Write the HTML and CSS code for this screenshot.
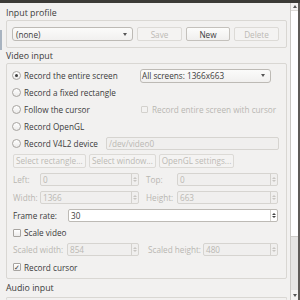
FILE: index.html
```html
<!DOCTYPE html>
<html>
<head>
<meta charset="utf-8">
<link rel="stylesheet" href="styles.css">
</head>
<body>
<div class="topbar"></div>
<div class="leftmark"></div>
<div class="main">
  <div class="content">
    <div class="title t1">Input profile</div>
    <div class="group g1">
      <div class="row r-profile">
        <div class="combo w-profile"><span class="ctext">(none)</span><span class="carrow"></span></div>
        <div class="btn dis w-save">Save</div>
        <div class="btn w-new">New</div>
        <div class="btn dis w-del">Delete</div>
      </div>
    </div>
    <div class="title t2">Video input</div>
    <div class="group g2">
      <div class="row h17">
        <div class="opt w-opt1"><span class="radio on"></span><span>Record the entire screen</span></div>
        <div class="combo w-screens"><span class="ctext">All screens: 1366x663</span><span class="carrow"></span></div>
      </div>
      <div class="row h17">
        <div class="opt"><span class="radio"></span><span>Record a fixed rectangle</span></div>
      </div>
      <div class="row h17">
        <div class="opt w-opt1"><span class="radio"></span><span>Follow the cursor</span></div>
        <div class="opt dis-text"><span class="check dis small"></span><span>Record entire screen with cursor</span></div>
      </div>
      <div class="row h17">
        <div class="opt"><span class="radio"></span><span>Record OpenGL</span></div>
      </div>
      <div class="row h16">
        <div class="opt w-opt5"><span class="radio"></span><span>Record V4L2 device</span></div>
        <div class="edit dis w-dev">/dev/video0</div>
      </div>
      <div class="row h19 r-btns">
        <div class="btn dis w-selrect">Select rectangle...</div>
        <div class="btn dis w-selwin">Select window...</div>
        <div class="btn dis w-opengl">OpenGL settings...</div>
      </div>
      <div class="row h18">
        <span class="lbl dis-text w-l1">Left:</span>
        <div class="spin dis w-s1"><span class="sval">0</span><span class="sarrows"><i class="up"></i><i class="dn"></i></span></div>
        <span class="lbl dis-text w-l2">Top:</span>
        <div class="spin dis w-s2"><span class="sval">0</span><span class="sarrows"><i class="up"></i><i class="dn"></i></span></div>
      </div>
      <div class="row h18">
        <span class="lbl dis-text w-l1">Width:</span>
        <div class="spin dis w-s1"><span class="sval">1366</span><span class="sarrows"><i class="up"></i><i class="dn"></i></span></div>
        <span class="lbl dis-text w-l2">Height:</span>
        <div class="spin dis w-s2"><span class="sval">663</span><span class="sarrows"><i class="up"></i><i class="dn"></i></span></div>
      </div>
      <div class="row h18">
        <span class="lbl w-fr">Frame rate:</span>
        <div class="spin w-frs"><span class="sval">30</span><span class="sarrows"><i class="up"></i><i class="dn"></i></span></div>
      </div>
      <div class="row h17">
        <div class="opt"><span class="check"></span><span>Scale video</span></div>
      </div>
      <div class="row h17">
        <span class="lbl dis-text w-sw">Scaled width:</span>
        <div class="spin dis w-sws"><span class="sval">854</span><span class="sarrows"><i class="up"></i><i class="dn"></i></span></div>
        <span class="lbl dis-text w-sh">Scaled height:</span>
        <div class="spin dis w-shs"><span class="sval">480</span><span class="sarrows"><i class="up"></i><i class="dn"></i></span></div>
      </div>
      <div class="row h18">
        <div class="opt"><span class="check on">✓</span><span>Record cursor</span></div>
      </div>
    </div>
    <div class="title t3">Audio input</div>
    <div class="group g3"></div>
  </div>
  <div class="scrollbar">
    <div class="sb-up"></div>
    <div class="sb-thumb"></div>
    <div class="sb-track"></div>
    <div class="sb-dn"></div>
  </div>
  <div class="edge"></div>
</div>
</body>
</html>
```

FILE: styles.css
```css
* { box-sizing: border-box; }
html, body {
  margin: 0;
  padding: 0;
  width: 300px;
  height: 300px;
  overflow: hidden;
  background: #f2f1f0;
  font-family: "Open Sans", "Noto Sans", sans-serif;
  font-size: 8.2px;
  color: #3c3c3c;
  white-space: nowrap;
}
.topbar { height: 3px; background: #3c3b37; }
.leftmark {
  position: absolute;
  left: 0; top: 30px;
  width: 2px; height: 20px;
  background: #a8b3c0;
}
.main { display: flex; height: 297px; }
.content { width: 290px; padding-left: 6px; }
.title { display: flex; align-items: flex-end; font-size: 8.8px; }
.t1 { height: 17px; padding-bottom: 1px; }
.t2 { height: 15px; padding-bottom: 1px; }
.t3 { height: 18px; padding-bottom: 3px; }
.group {
  width: 281px;
  border: 1px solid #d9d7d3;
  border-radius: 2px;
}
.g1 { height: 28px; padding: 6px 0 0 5px; }
.g2 { height: 216px; padding: 3px 0 0 5px; }
.g3 { height: 3px; border-bottom: none; }
.row { display: flex; align-items: center; }
.r-profile { gap: 4px; }
.h16 { height: 16px; }
.h17 { height: 17px; }
.h18 { height: 18px; }
.h19 { height: 19px; }

.combo {
  height: 14px;
  border: 1px solid #bdbab5;
  border-radius: 3px;
  background: linear-gradient(#fbfbfa, #f1f0ef);
  display: flex;
  align-items: center;
  justify-content: space-between;
  padding: 0 5px 0 3px;
}
.w-profile { width: 121px; }
.w-screens { width: 131px; padding-left: 1px; }
.carrow {
  width: 0; height: 0;
  border-left: 2.5px solid transparent;
  border-right: 2.5px solid transparent;
  border-top: 3px solid #555;
}
.btn {
  height: 14px;
  border: 1px solid #c4c1bc;
  border-radius: 2px;
  background: linear-gradient(#fcfcfb, #f0efee);
  display: flex;
  align-items: center;
  justify-content: center;
  color: #3c3c3c;
  overflow: hidden;
}
.btn.dis { color: #bcbab5; border-color: #dcdad6; background: #f4f3f2; }
.w-save { width: 45px; }
.w-new { width: 44px; }
.w-del { width: 45px; }
.r-btns { padding-left: 1px; }
.w-selrect { width: 73px; justify-content: flex-start; padding-left: 2px; }
.w-selwin { width: 67px; margin-left: 3px; justify-content: flex-start; padding-left: 2px; }
.w-opengl { width: 75px; margin-left: 3px; }

.opt { display: flex; align-items: center; }
.w-opt1 { width: 128px; }
.w-opt5 { width: 94px; }
.radio {
  width: 9px; height: 9px;
  border: 1px solid #a7a4a0;
  border-radius: 50%;
  background: linear-gradient(#ffffff, #ecebea);
  margin-right: 3px;
  display: flex;
  align-items: center;
  justify-content: center;
}
.radio.on::after {
  content: "";
  width: 3px; height: 3px;
  border-radius: 50%;
  background: #3c3c3c;
}
.check {
  width: 8px; height: 8px;
  border: 1px solid #a7a4a0;
  border-radius: 1px;
  background: linear-gradient(#ffffff, #ecebea);
  margin: 0 3px 0 1px;
  display: flex;
  align-items: center;
  justify-content: center;
  font-size: 7px;
  line-height: 1;
  color: #333;
}
.check.dis { border-color: #d3d1cd; background: #f3f2f1; }
.check.small { width: 7px; height: 7px; margin-right: 4px; }
.dis-text { color: #b9b7b2; }

.edit {
  height: 13px;
  border: 1px solid #d6d4d0;
  border-radius: 2px;
  background: #f0efee;
  color: #bab8b3;
  display: flex;
  align-items: center;
  padding-left: 2px;
}
.w-dev { width: 173px; }

.lbl { display: inline-block; padding-left: 1px; }
.w-l1 { width: 28px; }
.w-l2 { width: 32px; margin-left: 6px; }
.w-fr { width: 56px; }
.w-sw { width: 55px; }
.w-sh { width: 56px; margin-left: 8px; }

.spin {
  height: 13px;
  border: 1px solid #bdbab5;
  border-radius: 2px;
  background: #ffffff;
  display: flex;
  align-items: stretch;
  justify-content: space-between;
}
.spin.dis { border-color: #d6d4d0; background: #f0efee; color: #bab8b3; }
.sval { display: flex; align-items: center; padding-left: 2px; }
.sarrows {
  width: 7px;
  border-left: 1px solid #d3d1cd;
  display: flex;
  flex-direction: column;
  align-items: center;
  justify-content: center;
  gap: 1px;
}
.sarrows i { width: 0; height: 0; border-left: 2px solid transparent; border-right: 2px solid transparent; }
.sarrows .up { border-bottom: 2px solid #444; }
.sarrows .dn { border-top: 2px solid #444; }
.spin.dis .sarrows .up { border-bottom-color: #c8c6c2; }
.spin.dis .sarrows .dn { border-top-color: #c8c6c2; }
.w-s1 { width: 99px; }
.w-s2 { width: 101px; }
.w-frs { width: 210px; }
.w-sws { width: 72px; }
.w-shs { width: 75px; }

.scrollbar {
  width: 8px;
  border-left: 1px solid #cac8c4;
  display: flex;
  flex-direction: column;
  background: #f4f3f2;
}
.sb-up, .sb-dn {
  height: 7px;
  display: flex;
  align-items: center;
  justify-content: center;
}
.sb-up::after {
  content: "";
  border-left: 2.5px solid transparent;
  border-right: 2.5px solid transparent;
  border-bottom: 3px solid #555;
}
.sb-dn::after {
  content: "";
  border-left: 2.5px solid transparent;
  border-right: 2.5px solid transparent;
  border-top: 3px solid #555;
}
.sb-thumb { height: 227px; background: #ffffff; border-top: 1px solid #dcdad6; border-bottom: 1px solid #cfcdc9; }
.sb-track { flex: 1; background: #e6e5e3; }
.sb-dn { height: 10px; }
.edge { width: 2px; background: #5e5b57; }
```
